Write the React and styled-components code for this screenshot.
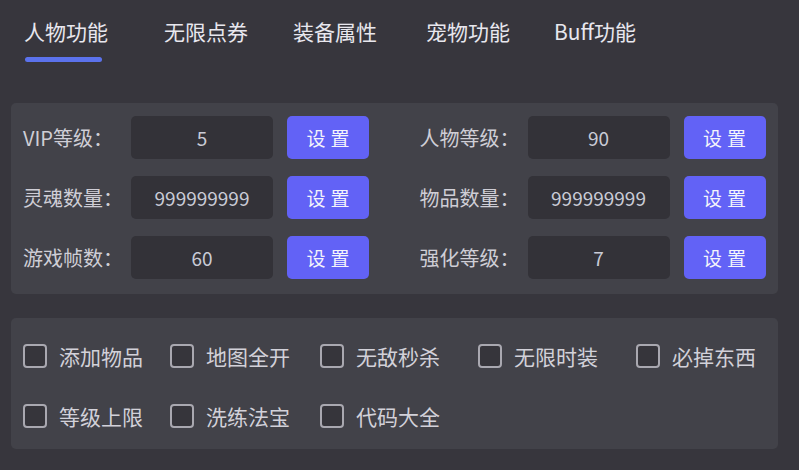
import React from 'react';
import styled, { createGlobalStyle } from 'styled-components';

const GlobalStyle = createGlobalStyle`
  html, body {
    margin: 0;
    padding: 0;
    background: #37363d;
  }
  body {
    font-family: "Noto Sans CJK SC", "Noto Sans", sans-serif;
  }
`;

const Page = styled.div`
  width: 799px;
  height: 470px;
  background: #37363d;
  padding: 0 21px 0 11px;
  box-sizing: border-box;
  overflow: hidden;
`;

const Tabs = styled.div`
  display: flex;
  padding: 15px 0 0 13px;
  height: 103px;
  box-sizing: border-box;
`;

const Tab = styled.div`
  position: relative;
  height: 32px;
  line-height: 32px;
  font-size: 21px;
  color: #e8e7ee;
  margin-right: ${(p) => p.$gap}px;
  white-space: nowrap;

  &::after {
    content: '';
    display: ${(p) => (p.$active ? 'block' : 'none')};
    position: absolute;
    left: 1px;
    top: 42px;
    width: 77px;
    height: 5px;
    border-radius: 3px;
    background: #5b72ec;
  }
`;

const Panel = styled.div`
  background: #424249;
  border-radius: 5px;
  padding: ${(p) => p.$pad};
  margin-top: ${(p) => p.$top || '0'};
`;

const FieldGrid = styled.div`
  display: grid;
  grid-template-columns: 1fr 1fr;
  column-gap: 50px;
  row-gap: 17px;
`;

const Field = styled.div`
  display: flex;
  align-items: center;
  height: 43px;
`;

const Label = styled.div`
  width: 108px;
  font-size: 20px;
  color: #cfced6;
  white-space: nowrap;
`;

const ValueBox = styled.div`
  width: 142px;
  height: 43px;
  border-radius: 5px;
  background: #333238;
  display: flex;
  align-items: center;
  justify-content: center;
  font-size: 19px;
  color: #c9cbd6;
  margin-right: 14px;
`;

const SetButton = styled.button`
  width: 82px;
  height: 43px;
  border: none;
  border-radius: 5px;
  background: #6262f6;
  color: #f4f4fb;
  font-family: inherit;
  font-size: 19px;
  letter-spacing: 5px;
  padding: 0 0 0 5px;
  cursor: pointer;
`;

const CheckGrid = styled.div`
  display: grid;
  grid-template-columns: 147px 150px 158px 158px 1fr;
  row-gap: 35px;
`;

const CheckItem = styled.label`
  display: flex;
  align-items: center;
  height: 25px;
  font-size: 21px;
  color: #d2d1d9;
  white-space: nowrap;
  cursor: pointer;
`;

const Box = styled.span`
  width: 20px;
  height: 20px;
  border: 2px solid #a9a8b0;
  border-radius: 4px;
  background: #36353b;
  margin-right: 12px;
  flex-shrink: 0;
`;

const tabs = [
  ['人物功能', 56],
  ['无限点券', 45],
  ['装备属性', 49],
  ['宠物功能', 44],
  ['Buff功能', 0],
];

const fields = [
  ['VIP等级：', '5'],
  ['人物等级：', '90'],
  ['灵魂数量：', '999999999'],
  ['物品数量：', '999999999'],
  ['游戏帧数：', '60'],
  ['强化等级：', '7'],
];

const checks = ['添加物品', '地图全开', '无敌秒杀', '无限时装', '必掉东西', '等级上限', '洗练法宝', '代码大全'];

export default function App() {
  return (
    <Page>
      <GlobalStyle />
      <Tabs>
        {tabs.map(([t, gap], i) => (
          <Tab key={t} $active={i === 0} $gap={gap}>{t}</Tab>
        ))}
      </Tabs>
      <Panel $pad="13px 12px 15px">
        <FieldGrid>
          {fields.map(([label, value]) => (
            <Field key={label}>
              <Label>{label}</Label>
              <ValueBox>{value}</ValueBox>
              <SetButton>设置</SetButton>
            </Field>
          ))}
        </FieldGrid>
      </Panel>
      <Panel $pad="25px 12px 21px" $top="24px">
        <CheckGrid>
          {checks.map((c) => (
            <CheckItem key={c}>
              <Box />
              {c}
            </CheckItem>
          ))}
        </CheckGrid>
      </Panel>
    </Page>
  );
}
